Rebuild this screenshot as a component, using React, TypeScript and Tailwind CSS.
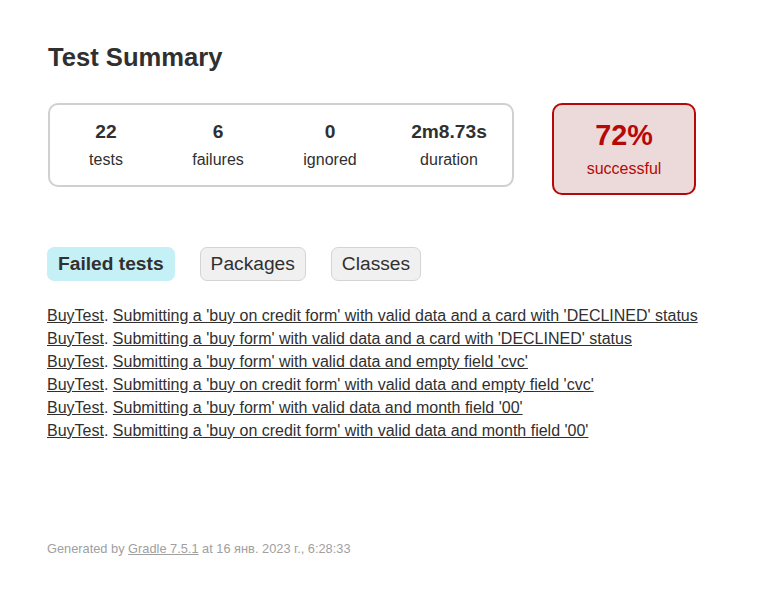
const failed = [
  "Submitting a 'buy on credit form' with valid data and a card with 'DECLINED' status",
  "Submitting a 'buy form' with valid data and a card with 'DECLINED' status",
  "Submitting a 'buy form' with valid data and empty field 'cvc'",
  "Submitting a 'buy on credit form' with valid data and empty field 'cvc'",
  "Submitting a 'buy form' with valid data and month field '00'",
  "Submitting a 'buy on credit form' with valid data and month field '00'",
];

const counters = [
  { value: "22", label: "tests", w: "w-[112px]" },
  { value: "6", label: "failures", w: "w-[112px]" },
  { value: "0", label: "ignored", w: "w-[112px]" },
  { value: "2m8.73s", label: "duration", w: "w-[126px]" },
];

export default function App() {
  return (
    <div className="min-h-screen bg-white text-[#303030] text-[16px] font-['Liberation_Sans',Arial,sans-serif]">
      <div className="pl-[48px] pr-[50px] pt-[43px] pb-[30px]">
        <h1 className="text-[25.6px] leading-[29px] font-bold whitespace-nowrap">Test Summary</h1>

        {/* Summary */}
        <div className="mt-[31px] flex items-start">
          <div className="flex border-2 border-[#d0d0d0] rounded-[10px] pt-[16px] pb-[16px]">
            {counters.map((c) => (
              <div key={c.label} className={`${c.w} text-center`}>
                <div className="text-[19.2px] leading-[22px] font-bold mb-[8px]">{c.value}</div>
                <p className="leading-[18px]">{c.label}</p>
              </div>
            ))}
          </div>
          <div className="ml-[38px] w-[144px] h-[92px] border-2 border-[#b60808] bg-[#ecdada] rounded-[10px] text-center text-[#b60808] pt-[14px]">
            <div className="text-[28.8px] leading-[33px] font-bold mb-[8px]">72%</div>
            <p className="leading-[18px]">successful</p>
          </div>
        </div>

        {/* Tabs */}
        <ul className="mt-[52px] flex -ml-px">
          <li className="mr-[25px] px-[10px] py-[5px] border border-[#c5f0f5] bg-[#c5f0f5] rounded-[7px]">
            <a className="block text-[19.2px] leading-[22px] font-bold">Failed tests</a>
          </li>
          <li className="mr-[25px] px-[10px] py-[5px] border border-[#d4d4d4] bg-[#f0f0f0] rounded-[7px]">
            <a className="block text-[19.2px] leading-[22px]">Packages</a>
          </li>
          <li className="mr-[25px] px-[10px] py-[5px] border border-[#d4d4d4] bg-[#f0f0f0] rounded-[7px]">
            <a className="block text-[19.2px] leading-[22px]">Classes</a>
          </li>
        </ul>

        {/* Failed tests list */}
        <ul className="mt-[26px] -ml-px">
          {failed.map((t) => (
            <li key={t} className="leading-[18px] mb-[5px] whitespace-nowrap">
              <a className="underline">BuyTest</a>. <a className="underline">{t}</a>
            </li>
          ))}
        </ul>

        {/* Footer */}
        <div className="mt-[101px] text-[12.8px] leading-[15px] text-[#a0a0a0] whitespace-nowrap -ml-px">
          Generated by <a className="underline">Gradle 7.5.1</a> at 16 янв. 2023 г., 6:28:33
        </div>
      </div>
    </div>
  );
}
